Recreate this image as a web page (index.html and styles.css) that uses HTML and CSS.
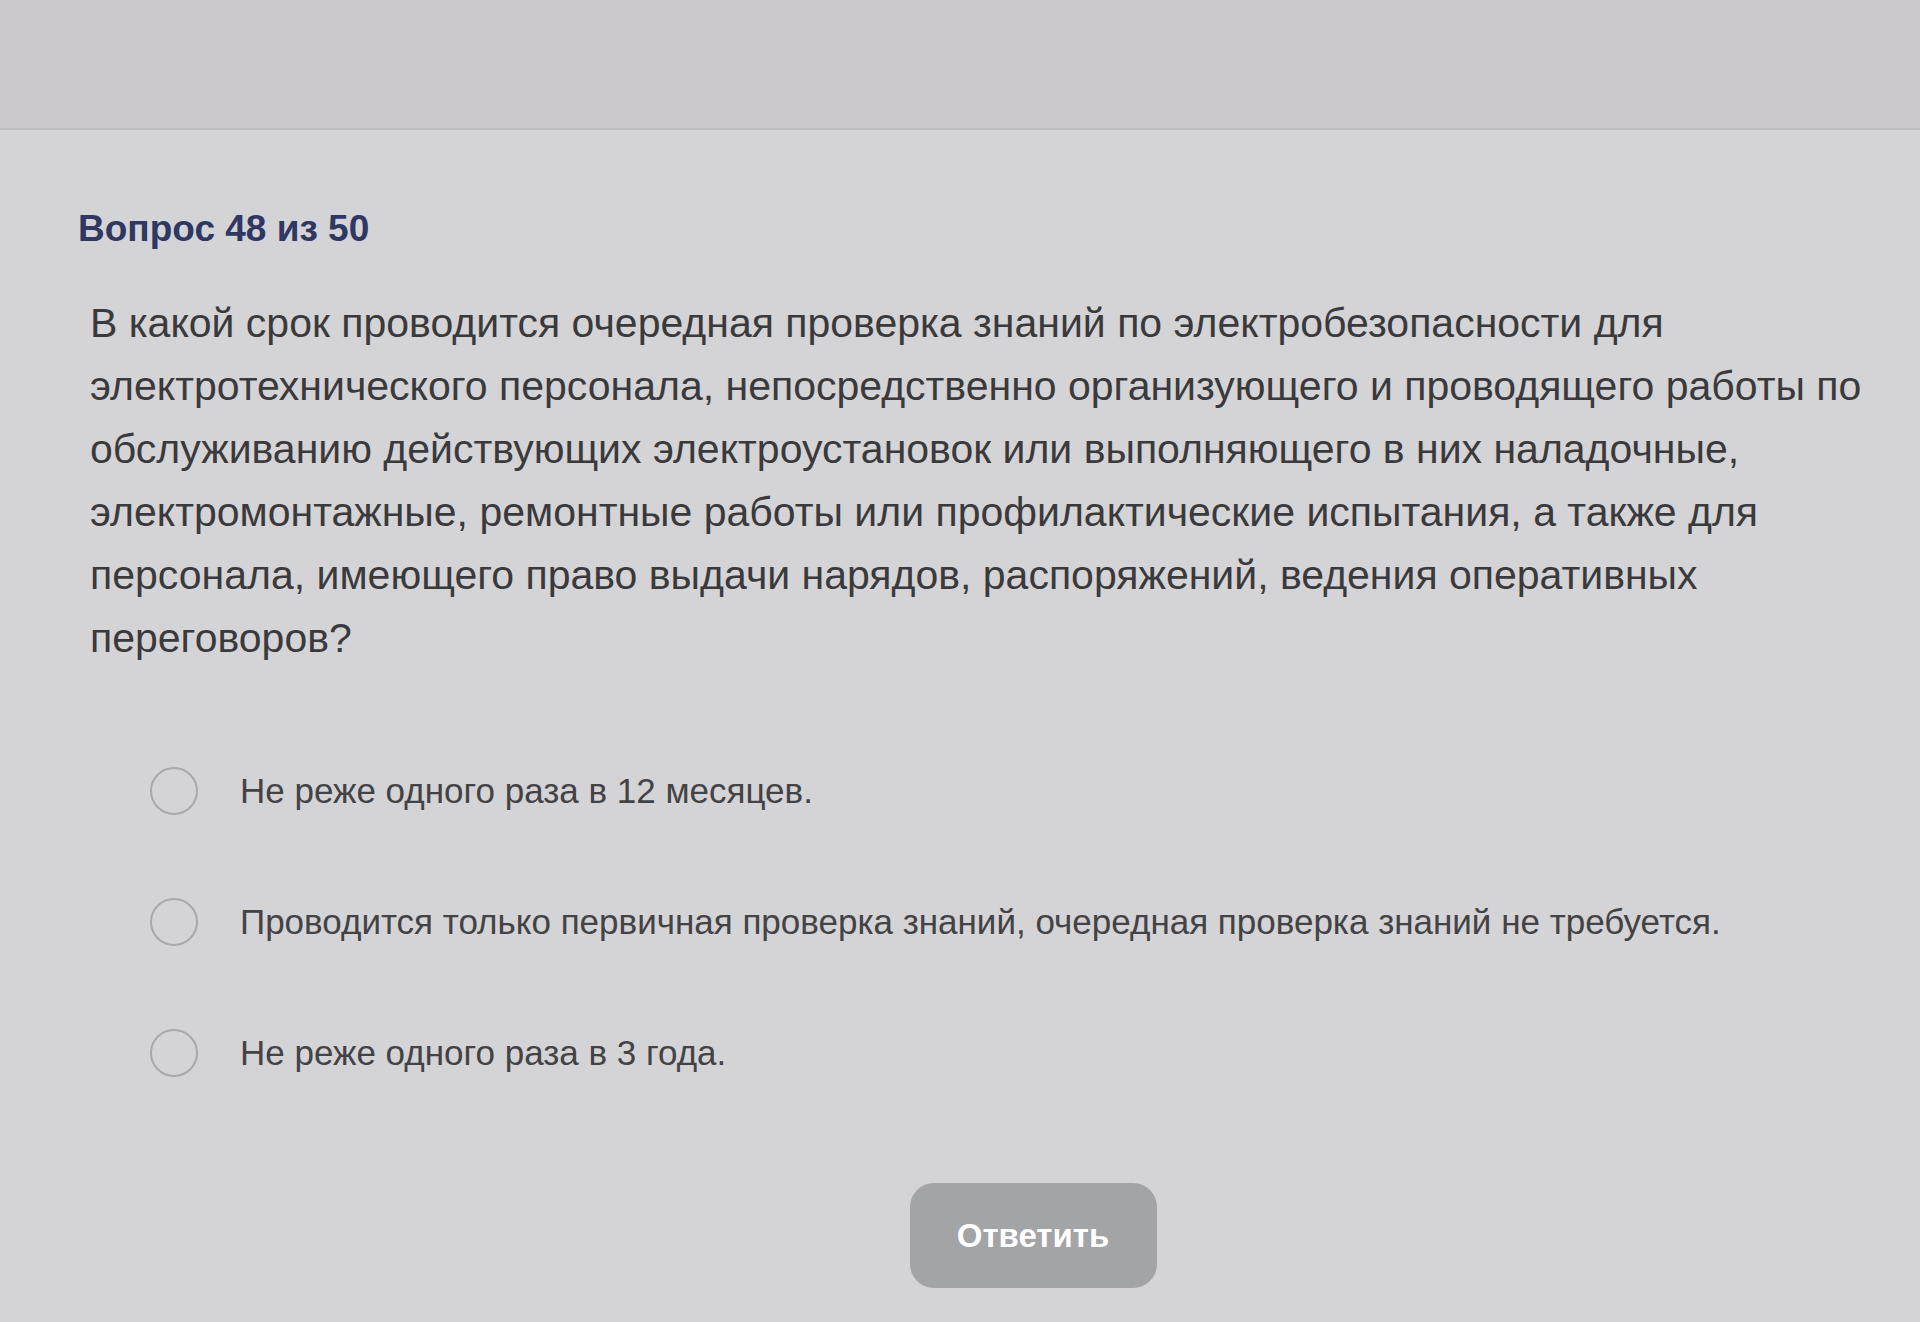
FILE: index.html
```html
<!DOCTYPE html>
<html lang="ru">
<head>
  <meta charset="utf-8">
  <title>Тестирование</title>
  <link rel="stylesheet" href="styles.css">
</head>
<body>
  <div class="topbar"></div>

  <main class="quiz">
    <h2 class="quiz-count">Вопрос 48 из 50</h2>

    <p class="question">В какой срок проводится очередная проверка знаний по электробезопасности для электротехнического персонала, непосредственно организующего и проводящего работы по обслуживанию действующих электроустановок или выполняющего в них наладочные, электромонтажные, ремонтные работы или профилактические испытания, а также для персонала, имеющего право выдачи нарядов, распоряжений, ведения оперативных переговоров?</p>

    <form class="answers">
      <label class="answer">
        <input type="radio" name="answer" value="1">
        <span class="radio"></span>
        <span class="answer-text">Не реже одного раза в 12 месяцев.</span>
      </label>
      <label class="answer">
        <input type="radio" name="answer" value="2">
        <span class="radio"></span>
        <span class="answer-text">Проводится только первичная проверка знаний, очередная проверка знаний не требуется.</span>
      </label>
      <label class="answer">
        <input type="radio" name="answer" value="3">
        <span class="radio"></span>
        <span class="answer-text">Не реже одного раза в 3 года.</span>
      </label>

      <div class="actions">
        <button type="button" class="submit" disabled>Ответить</button>
      </div>
    </form>
  </main>
</body>
</html>
```

FILE: styles.css
```css
body {
  margin: 0;
  font-family: "Liberation Sans", Arial, sans-serif;
  background-color: #d4d3d5;
  color: #3c3c3f;
}

.topbar {
  height: 128px;
  background-color: #cbc9cc;
  border-bottom: 2px solid #bdbbbe;
}

.quiz {
  padding: 0 20px 0 78px;
}

.quiz-count {
  margin: 78px 0 0;
  font-size: 37px;
  line-height: 42px;
  font-weight: bold;
  color: #2f3763;
}

.question {
  max-width: 1800px;
  margin: 42px 0 0;
  padding-left: 12px;
  font-size: 41px;
  line-height: 63px;
  color: #3a3a3d;
}

.answers {
  margin-top: 97px;
  padding-left: 72px;
  display: flex;
  flex-direction: column;
  gap: 83px;
}

.answer {
  display: flex;
  align-items: center;
  gap: 42px;
  cursor: pointer;
}

.answer input {
  display: none;
}

.radio {
  width: 44px;
  height: 44px;
  border: 2px solid #a9a9ab;
  border-radius: 50%;
  flex-shrink: 0;
}

.answer input:checked + .radio {
  border: 14px solid #2f3763;
  width: 20px;
  height: 20px;
}

.answer-text {
  font-size: 35px;
  color: #434346;
}

.actions {
  margin-top: 23px;
  display: flex;
  justify-content: center;
  padding-left: 16px;
}

.submit {
  width: 247px;
  height: 105px;
  border: none;
  border-radius: 24px;
  background-color: #a3a4a6;
  color: #fff;
  font-family: inherit;
  font-size: 33px;
  font-weight: bold;
  cursor: pointer;
}
```
